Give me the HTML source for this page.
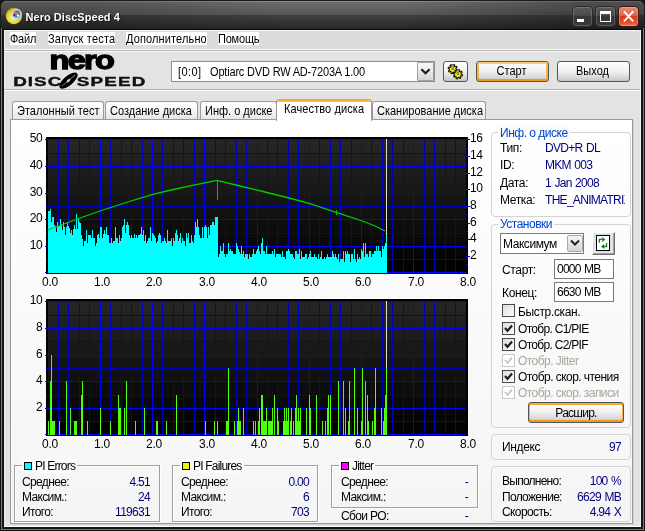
<!DOCTYPE html>
<html lang="ru">
<head>
<meta charset="utf-8">
<title>Nero DiscSpeed 4</title>
<style>
html,body{margin:0;padding:0;}
body{width:645px;height:531px;position:relative;overflow:hidden;background:#151515;
 font-family:"Liberation Sans","DejaVu Sans",sans-serif;font-size:11px;color:#000;}
.abs,.win *{position:absolute;box-sizing:border-box;}
.win{position:absolute;left:0;top:0;width:645px;height:531px;overflow:hidden;will-change:transform;}
.t{white-space:nowrap;line-height:13px;height:13px;}
/* frame */
.client{left:4px;top:30px;width:637px;height:497px;background:#e3e3e3;}
.title{left:0;top:0;width:645px;height:30px;border-radius:6px 6px 0 0;
 background:linear-gradient(90deg,rgba(0,0,0,.2) 0,rgba(0,0,0,.2) 90px,rgba(0,0,0,0) 290px,rgba(0,0,0,0) 400px,rgba(0,0,0,.28) 580px,rgba(0,0,0,.28) 100%),linear-gradient(#8a8a8a 0,#8a8a8a 1px,#6d6d6d 1px,#565656 14px,#414141 14px,#272727 28px,#0c0c0c 28px,#0c0c0c 29px);
 border:1px solid #1a1a1a;border-bottom:none;}
.ttext{left:25.5px;top:9px;font-weight:bold;font-size:11px;color:#fff;line-height:16px;white-space:nowrap;
 text-shadow:1px 1px 0 #201010;letter-spacing:0.05px;}
.wb{top:6px;width:21px;height:21px;border-radius:4px;border:1px solid #2b2b2b;
 background:linear-gradient(#5a5a5a 0,#4c4c4c 44%,#363636 47%,#3a3a3a 100%);box-shadow:inset 0 0 0 1px rgba(255,255,255,.16);}
.wb.close{background:linear-gradient(#e88874 0,#e0694e 44%,#d93a18 47%,#e2542e 85%,#ee7a58 100%);border-color:#3a1c14;box-shadow:inset 0 0 0 1px rgba(255,200,180,.35);}
/* menu */
.mi{top:2px;height:13px;background:#fff;line-height:15px;white-space:nowrap;font-size:11px;overflow:hidden;}
/* generic */
.btn{border:1px solid #555;border-radius:3px;background:linear-gradient(#fff 0,#f2f2f2 45%,#dadada 80%,#c4c4c4 100%);
 text-align:center;line-height:19px;font-size:11px;white-space:nowrap;}
.btn.def{box-shadow:inset 0 2px 0 #fbc976,inset 0 -2px 0 #ef9a14,inset 2px 0 0 #f7b248,inset -2px 0 0 #f7b248;}
.tab{top:71px;height:19px;border:1px solid #9a9a9a;border-bottom:none;border-radius:3px 3px 0 0;
 background:linear-gradient(#fff 0,#f6f6f6 50%,#e4e4e4 100%);line-height:19px;font-size:11px;padding-left:4px;white-space:nowrap;overflow:hidden;}
.tab.sel{top:69px;height:22px;background:#fff;border-top:none;line-height:21px;padding-left:7px;z-index:3;letter-spacing:0.1px;}
.tab.sel:before{content:"";position:absolute;left:-1px;right:-1px;top:0;height:3px;border-radius:3px 3px 0 0;
 background:linear-gradient(#f0a020,#ffc040);}
.page{left:6px;top:89px;width:623px;height:405px;border:1px solid #9a9a9a;background:linear-gradient(#fff,#f5f5f5);box-shadow:1px 1px 0 #d2d2d2;}
.yl{left:20px;width:22px;text-align:right;font-size:12px;line-height:14px;height:14px;letter-spacing:-0.6px;}
.rl{left:470px;width:22px;text-align:left;font-size:12px;line-height:14px;height:14px;letter-spacing:-0.4px;}
.xl{width:30px;text-align:center;font-size:12px;line-height:14px;height:14px;letter-spacing:-0.3px;}
.gb{border:1px solid #d3d3d6;border-radius:4px;}
.gl{font-size:12px;line-height:14px;height:14px;color:#0046d5;background:#fbfbfb;padding:0 2px;white-space:nowrap;letter-spacing:-0.5px;}
.r12{font-size:12px;line-height:14px;height:14px;white-space:nowrap;letter-spacing:-0.35px;}
.val{color:#000080;letter-spacing:-0.7px;word-spacing:0.8px;}
.inp{border:1px solid #7a7a7a;background:#fff;font-size:12px;line-height:17px;padding-left:2px;white-space:nowrap;letter-spacing:-0.75px;word-spacing:0.8px;}
.cb{width:13px;height:13px;border:1px solid #4a4a4a;background:linear-gradient(135deg,#dcdcdc,#fff);}
.cb.dis{border-color:#c8c8c8;background:#fff;}
.eb{border:1px solid #a0a0a0;box-shadow:inset 1px 1px 0 #fff, 1px 1px 0 #fff;}
.sq{width:8px;height:8px;border:1px solid #000;}
.right{text-align:right;}
.win .th{position:relative;display:inline-block;transform:scaleY(1.13);transform-origin:0 78%;}
</style>
</head>
<body>
<div class="win">
 <!-- title bar -->
 <div class="title"></div>
 <svg style="left:5px;top:6px" width="20" height="20" viewBox="0 0 20 20">
  <defs>
   <radialGradient id="dg" cx="0.45" cy="0.6" r="0.6"><stop offset="0" stop-color="#fff6a8"/><stop offset="0.55" stop-color="#e8d83a"/><stop offset="1" stop-color="#b8a010"/></radialGradient>
  </defs>
  <circle cx="9" cy="10" r="8.2" fill="url(#dg)"/>
  <circle cx="11.6" cy="8" r="4.9" fill="#eef0f4" stroke="#aab0b8" stroke-width="0.5"/>
  <circle cx="11.6" cy="8" r="3.8" fill="#2a8ee0"/>
  <path d="M10 5.2 L12.6 9.6" stroke="#f26a3a" stroke-width="1.7"/>
  <circle cx="13" cy="9.6" r="1.1" fill="#fff"/>
  <circle cx="13" cy="5.6" r="1.1" fill="#2f9a3a"/>
  <circle cx="9.3" cy="9" r="1.1" fill="#b01010"/>
  <circle cx="8.8" cy="7" r="0.7" fill="#f8e020"/>
 </svg>
 <div class="ttext">Nero DiscSpeed 4</div>
 <div class="wb" style="left:572px"><div style="left:4px;top:12px;width:7px;height:3px;background:#fff"></div></div>
 <div class="wb" style="left:595px"><div style="left:4px;top:4px;width:11px;height:11px;border:1px solid #fff;border-top-width:3px"></div></div>
 <div class="wb close" style="left:618px">
  <svg style="left:0;top:0" width="19" height="19" viewBox="0 0 19 19" shape-rendering="auto"><path d="M5 4.4 L14.2 14.4 M14.2 4.4 L5 14.4" stroke="#fff" stroke-width="2" stroke-linecap="butt"/></svg>
 </div>
 <!-- frame edges -->
 <div style="left:0;top:28px;width:1px;height:503px;background:#111"></div>
 <div style="left:1px;top:28px;width:1px;height:502px;background:#777"></div>
 <div style="left:644px;top:28px;width:1px;height:503px;background:#111"></div>
 <div style="left:643px;top:28px;width:1px;height:502px;background:#777"></div>
 <div style="left:0;top:530px;width:645px;height:1px;background:#111"></div>
 <div style="left:1px;top:529px;width:643px;height:1px;background:#777"></div>

 <div class="client">
  <div style="left:0;top:0;width:1px;height:497px;background:#ececec"></div>
  <div style="left:636px;top:0;width:1px;height:497px;background:#f0f0f0"></div>
  <div style="left:0;top:496px;width:637px;height:1px;background:#fff"></div>
  <div style="left:0;top:0;width:637px;height:1px;background:#f4f4f4"></div>
  <!-- menu -->
  <div style="left:1px;top:1px;width:635px;height:18px;background:#dcdcdc"></div>
  <div class="mi" style="left:6px;width:26px;letter-spacing:-0.25px"><span class="th">Файл</span></div>
  <div class="mi" style="left:44px;width:67px;letter-spacing:0.2px"><span class="th">Запуск теста</span></div>
  <div class="mi" style="left:122px;width:81px;letter-spacing:0.13px"><span class="th">Дополнительно</span></div>
  <div class="mi" style="left:214px;width:41px;letter-spacing:-0.2px"><span class="th">Помощь</span></div>
  <div style="left:0;top:19px;width:636px;height:1px;background:#fafafa"></div>
  <div style="left:0;top:20px;width:636px;height:1px;background:#b8b8b8"></div>
  <div style="left:0;top:21px;width:636px;height:1px;background:#fcfcfc"></div>
  <div style="left:0;top:59px;width:636px;height:1px;background:#b4b4b4"></div>
  <div style="left:0;top:60px;width:636px;height:1px;background:#fcfcfc"></div>
  <!-- logo -->
  <svg style="left:8px;top:20px" width="140" height="40" viewBox="0 0 140 40">
   <g transform="translate(37.6,19) scale(1.27,1)"><text x="0" y="0" font-family="Liberation Sans, sans-serif" font-weight="bold" font-size="25.5" letter-spacing="-1.3" fill="#000" stroke="#000" stroke-width="1.3">nero</text></g>
   <g transform="translate(1.2,35.6) scale(1.45,1)"><text x="0" y="0" font-family="Liberation Sans, sans-serif" font-weight="bold" font-size="13" letter-spacing="0.7" fill="#111" stroke="#111" stroke-width="0.4">DISC</text></g>
   <g transform="translate(64.8,35.6) scale(1.45,1)"><text x="0" y="0" font-family="Liberation Sans, sans-serif" font-weight="bold" font-size="13" letter-spacing="0.8" fill="#111" stroke="#111" stroke-width="0.4">SPEED</text></g>
   <g transform="translate(56.5,30.6) rotate(-40)"><ellipse cx="0" cy="0" rx="11.2" ry="4.8" fill="#000"/><ellipse cx="0" cy="0" rx="2.3" ry="1.1" fill="#e3e3e3"/><rect x="-9" y="-0.3" width="18" height="0.6" fill="#bbb"/></g>
  </svg>
  <!-- drive combo -->
  <div style="left:167px;top:31px;width:264px;height:21px;border:1px solid #8e8e8e;background:#fff"></div>
  <div class="t" style="left:174px;top:36px;font-size:11px;letter-spacing:0.4px"><span class="th">[0:0]</span></div><div class="t" style="left:206px;top:36px;font-size:11px;letter-spacing:-0.18px"><span class="th">Optiarc DVD RW AD-7203A 1.00</span></div>
  <div style="left:413px;top:32px;width:17px;height:19px;border:1px solid #a0a0a0;border-radius:1px;background:linear-gradient(#f8f8f8,#d6d6d6)">
   <svg style="left:2px;top:5px" width="11" height="8" viewBox="0 0 11 8"><path d="M1.4 1.2 L5.5 5.3 L9.6 1.2" fill="none" stroke="#1a1a1a" stroke-width="2.1"/></svg>
  </div>
  <div class="btn" style="left:439px;top:31px;width:25px;height:21px">
   <svg style="left:3px;top:1px" width="18" height="18" viewBox="0 0 18 18" shape-rendering="auto">
    <path d="M9.1,6.1 L10.5,6.7 L10.1,7.9 L8.7,7.7 L8.1,8.4 L8.7,9.8 L7.6,10.4 L6.7,9.3 L5.8,9.4 L5.2,10.8 L4.0,10.4 L4.2,9.0 L3.5,8.4 L2.1,9.0 L1.5,7.9 L2.6,7.0 L2.5,6.1 L1.1,5.5 L1.5,4.3 L2.9,4.5 L3.5,3.8 L2.9,2.4 L4.0,1.8 L4.9,2.9 L5.8,2.8 L6.4,1.4 L7.6,1.8 L7.4,3.2 L8.1,3.8 L9.5,3.2 L10.1,4.3 L9.0,5.2Z" fill="#f2f200" stroke="#141400" stroke-width="1.1" stroke-linejoin="round"/>
    <path d="M14.2,11.2 L15.6,11.8 L15.2,13.0 L13.8,12.8 L13.2,13.5 L13.8,14.9 L12.7,15.5 L11.8,14.4 L10.9,14.5 L10.3,15.9 L9.1,15.5 L9.3,14.1 L8.6,13.5 L7.2,14.1 L6.6,13.0 L7.7,12.1 L7.6,11.2 L6.2,10.6 L6.6,9.4 L8.0,9.6 L8.6,8.9 L8.0,7.5 L9.1,6.9 L10.0,8.0 L10.9,7.9 L11.5,6.5 L12.7,6.9 L12.5,8.3 L13.2,8.9 L14.6,8.3 L15.2,9.4 L14.1,10.3Z" fill="#f2f200" stroke="#141400" stroke-width="1.1" stroke-linejoin="round"/>
    <rect x="4.9" y="1.2" width="1.9" height="5.2" fill="#b8b8b8" stroke="#333" stroke-width="0.5"/>
    <rect x="10" y="6.3" width="1.9" height="5.2" fill="#b8b8b8" stroke="#333" stroke-width="0.5"/>
   </svg>
  </div>
  <div class="btn def" style="left:472px;top:31px;width:73px;height:21px;padding-right:2px"><span class="th">Старт</span></div>
  <div class="btn" style="left:553px;top:31px;width:73px;height:21px;padding-right:2px"><span class="th">Выход</span></div>
  <!-- tabs -->
  <div class="tab" style="left:8px;width:92px"><span class="th">Эталонный тест</span></div>
  <div class="tab" style="left:101px;width:93px"><span class="th">Создание диска</span></div>
  <div class="tab" style="left:196px;width:77px"><span class="th">Инф. о диске</span></div>
  <div class="tab" style="left:368px;width:114px"><span class="th">Сканирование диска</span></div>
  <div class="page"></div>
  <div class="tab sel" style="left:272px;width:96px"><span class="th">Качество диска</span></div>
 </div>

 <!-- charts (window coordinates) -->
 <svg style="left:0;top:0" width="645" height="531" viewBox="0 0 645 531" shape-rendering="crispEdges">
  <defs>
   <linearGradient id="cg" x1="0" y1="0" x2="0" y2="1"><stop offset="0" stop-color="#262626"/><stop offset="1" stop-color="#000"/></linearGradient>
  </defs>
  <!-- chart 1 -->
  <rect x="46" y="137" width="422" height="137" fill="#000"/>
  <rect x="48" y="139" width="418" height="134" fill="url(#cg)"/>
  <rect x="58" y="139" width="1" height="133" fill="#0000bc"/>
<rect x="68" y="139" width="1" height="133" fill="#0000bc"/>
<rect x="79" y="139" width="1" height="133" fill="#0000bc"/>
<rect x="89" y="139" width="1" height="133" fill="#0000bc"/>
<rect x="100" y="139" width="1" height="133" fill="#0000ff"/>
<rect x="110" y="139" width="1" height="133" fill="#0000bc"/>
<rect x="121" y="139" width="1" height="133" fill="#0000bc"/>
<rect x="131" y="139" width="1" height="133" fill="#0000bc"/>
<rect x="142" y="139" width="1" height="133" fill="#0000bc"/>
<rect x="152" y="139" width="1" height="133" fill="#0000ff"/>
<rect x="162" y="139" width="1" height="133" fill="#0000bc"/>
<rect x="173" y="139" width="1" height="133" fill="#0000bc"/>
<rect x="183" y="139" width="1" height="133" fill="#0000bc"/>
<rect x="194" y="139" width="1" height="133" fill="#0000bc"/>
<rect x="204" y="139" width="1" height="133" fill="#0000ff"/>
<rect x="215" y="139" width="1" height="133" fill="#0000bc"/>
<rect x="225" y="139" width="1" height="133" fill="#0000bc"/>
<rect x="236" y="139" width="1" height="133" fill="#0000bc"/>
<rect x="246" y="139" width="1" height="133" fill="#0000bc"/>
<rect x="257" y="139" width="1" height="133" fill="#0000ff"/>
<rect x="267" y="139" width="1" height="133" fill="#0000bc"/>
<rect x="277" y="139" width="1" height="133" fill="#0000bc"/>
<rect x="288" y="139" width="1" height="133" fill="#0000bc"/>
<rect x="298" y="139" width="1" height="133" fill="#0000bc"/>
<rect x="309" y="139" width="1" height="133" fill="#0000ff"/>
<rect x="319" y="139" width="1" height="133" fill="#0000bc"/>
<rect x="330" y="139" width="1" height="133" fill="#0000bc"/>
<rect x="340" y="139" width="1" height="133" fill="#0000bc"/>
<rect x="351" y="139" width="1" height="133" fill="#0000bc"/>
<rect x="361" y="139" width="1" height="133" fill="#0000ff"/>
<rect x="371" y="139" width="1" height="133" fill="#0000bc"/>
<rect x="382" y="139" width="1" height="133" fill="#0000bc"/>
<rect x="392" y="139" width="1" height="133" fill="#0000bc"/>
<rect x="403" y="139" width="1" height="133" fill="#0000bc"/>
<rect x="413" y="139" width="1" height="133" fill="#0000ff"/>
<rect x="424" y="139" width="1" height="133" fill="#0000bc"/>
<rect x="434" y="139" width="1" height="133" fill="#0000bc"/>
<rect x="445" y="139" width="1" height="133" fill="#0000bc"/>
<rect x="455" y="139" width="1" height="133" fill="#0000bc"/>
<rect x="45" y="139" width="421" height="1" fill="#0000ff"/>
<rect x="46" y="153" width="420" height="1" fill="#0000bc"/>
<rect x="45" y="166" width="421" height="1" fill="#0000ff"/>
<rect x="46" y="179" width="420" height="1" fill="#0000bc"/>
<rect x="45" y="193" width="421" height="1" fill="#0000ff"/>
<rect x="46" y="206" width="420" height="1" fill="#0000bc"/>
<rect x="45" y="219" width="421" height="1" fill="#0000ff"/>
<rect x="46" y="233" width="420" height="1" fill="#0000bc"/>
<rect x="45" y="246" width="421" height="1" fill="#0000ff"/>
<rect x="46" y="259" width="420" height="1" fill="#0000bc"/>
<rect x="45" y="272" width="421" height="1" fill="#0000ff"/>
  <path d="M48,273 L48,211 L49,211 L49,211 L50,211 L50,209 L51,209 L51,222 L52,222 L52,217 L53,217 L53,217 L54,217 L54,225 L55,225 L55,226 L56,226 L56,232 L57,232 L57,222 L58,222 L58,226 L59,226 L59,226 L60,226 L60,219 L61,219 L61,224 L62,224 L62,230 L63,230 L63,222 L64,222 L64,227 L65,227 L65,235 L66,235 L66,227 L67,227 L67,223 L68,223 L68,226 L69,226 L69,228 L70,228 L70,233 L71,233 L71,230 L72,230 L72,235 L73,235 L73,229 L74,229 L74,225 L75,225 L75,229 L76,229 L76,214 L77,214 L77,229 L78,229 L78,218 L79,218 L79,222 L80,222 L80,223 L81,223 L81,235 L82,235 L82,239 L83,239 L83,246 L84,246 L84,241 L85,241 L85,241 L86,241 L86,230 L87,230 L87,243 L88,243 L88,235 L89,235 L89,235 L90,235 L90,235 L91,235 L91,238 L92,238 L92,230 L93,230 L93,238 L94,238 L94,238 L95,238 L95,246 L96,246 L96,243 L97,243 L97,235 L98,235 L98,234 L99,234 L99,238 L100,238 L100,227 L101,227 L101,227 L102,227 L102,238 L103,238 L103,234 L104,234 L104,230 L105,230 L105,234 L106,234 L106,227 L107,227 L107,235 L108,235 L108,235 L109,235 L109,243 L110,243 L110,243 L111,243 L111,238 L112,238 L112,243 L113,243 L113,241 L114,241 L114,241 L115,241 L115,227 L116,227 L116,238 L117,238 L117,238 L118,238 L118,243 L119,243 L119,235 L120,235 L120,241 L121,241 L121,238 L122,238 L122,227 L123,227 L123,225 L124,225 L124,219 L125,219 L125,233 L126,233 L126,225 L127,225 L127,222 L128,222 L128,225 L129,225 L129,235 L130,235 L130,238 L131,238 L131,235 L132,235 L132,238 L133,238 L133,238 L134,238 L134,234 L135,234 L135,238 L136,238 L136,235 L137,235 L137,238 L138,238 L138,235 L139,235 L139,235 L140,235 L140,234 L141,234 L141,227 L142,227 L142,235 L143,235 L143,230 L144,230 L144,241 L145,241 L145,235 L146,235 L146,243 L147,243 L147,241 L148,241 L148,238 L149,238 L149,238 L150,238 L150,227 L151,227 L151,241 L152,241 L152,233 L153,233 L153,234 L154,234 L154,236 L155,236 L155,238 L156,238 L156,243 L157,243 L157,241 L158,241 L158,235 L159,235 L159,233 L160,233 L160,235 L161,235 L161,243 L162,243 L162,241 L163,241 L163,241 L164,241 L164,238 L165,238 L165,241 L166,241 L166,243 L167,243 L167,230 L168,230 L168,241 L169,241 L169,241 L170,241 L170,241 L171,241 L171,238 L172,238 L172,246 L173,246 L173,238 L174,238 L174,241 L175,241 L175,233 L176,233 L176,230 L177,230 L177,235 L178,235 L178,241 L179,241 L179,238 L180,238 L180,233 L181,233 L181,243 L182,243 L182,238 L183,238 L183,241 L184,241 L184,241 L185,241 L185,246 L186,246 L186,233 L187,233 L187,238 L188,238 L188,233 L189,233 L189,243 L190,243 L190,243 L191,243 L191,235 L192,235 L192,241 L193,241 L193,243 L194,243 L194,235 L195,235 L195,222 L196,222 L196,227 L197,227 L197,219 L198,219 L198,227 L199,227 L199,235 L200,235 L200,238 L201,238 L201,238 L202,238 L202,227 L203,227 L203,238 L204,238 L204,227 L205,227 L205,225 L206,225 L206,227 L207,227 L207,238 L208,238 L208,227 L209,227 L209,235 L210,235 L210,225 L211,225 L211,225 L212,225 L212,222 L213,222 L213,222 L214,222 L214,225 L215,225 L215,217 L216,217 L216,217 L217,217 L217,217 L218,217 L218,257 L219,257 L219,254 L220,254 L220,246 L221,246 L221,251 L222,251 L222,251 L223,251 L223,243 L224,243 L224,254 L225,254 L225,257 L226,257 L226,254 L227,254 L227,254 L228,254 L228,243 L229,243 L229,251 L230,251 L230,249 L231,249 L231,251 L232,251 L232,251 L233,251 L233,254 L234,254 L234,254 L235,254 L235,254 L236,254 L236,243 L237,243 L237,246 L238,246 L238,249 L239,249 L239,252 L240,252 L240,254 L241,254 L241,246 L242,246 L242,254 L243,254 L243,251 L244,251 L244,257 L245,257 L245,254 L246,254 L246,254 L247,254 L247,254 L248,254 L248,259 L249,259 L249,254 L250,254 L250,257 L251,257 L251,257 L252,257 L252,254 L253,254 L253,249 L254,249 L254,254 L255,254 L255,254 L256,254 L256,251 L257,251 L257,249 L258,249 L258,246 L259,246 L259,251 L260,251 L260,254 L261,254 L261,243 L262,243 L262,238 L263,238 L263,251 L264,251 L264,251 L265,251 L265,254 L266,254 L266,246 L267,246 L267,254 L268,254 L268,254 L269,254 L269,254 L270,254 L270,254 L271,254 L271,254 L272,254 L272,251 L273,251 L273,254 L274,254 L274,249 L275,249 L275,257 L276,257 L276,254 L277,254 L277,254 L278,254 L278,254 L279,254 L279,254 L280,254 L280,254 L281,254 L281,257 L282,257 L282,251 L283,251 L283,257 L284,257 L284,257 L285,257 L285,259 L286,259 L286,251 L287,251 L287,251 L288,251 L288,249 L289,249 L289,251 L290,251 L290,254 L291,254 L291,254 L292,254 L292,254 L293,254 L293,257 L294,257 L294,259 L295,259 L295,251 L296,251 L296,251 L297,251 L297,254 L298,254 L298,254 L299,254 L299,249 L300,249 L300,259 L301,259 L301,251 L302,251 L302,257 L303,257 L303,257 L304,257 L304,257 L305,257 L305,254 L306,254 L306,254 L307,254 L307,259 L308,259 L308,257 L309,257 L309,254 L310,254 L310,251 L311,251 L311,257 L312,257 L312,257 L313,257 L313,257 L314,257 L314,254 L315,254 L315,257 L316,257 L316,257 L317,257 L317,259 L318,259 L318,254 L319,254 L319,259 L320,259 L320,257 L321,257 L321,251 L322,251 L322,259 L323,259 L323,259 L324,259 L324,257 L325,257 L325,259 L326,259 L326,257 L327,257 L327,254 L328,254 L328,257 L329,257 L329,257 L330,257 L330,257 L331,257 L331,257 L332,257 L332,251 L333,251 L333,254 L334,254 L334,257 L335,257 L335,254 L336,254 L336,257 L337,257 L337,259 L338,259 L338,254 L339,254 L339,262 L340,262 L340,259 L341,259 L341,259 L342,259 L342,259 L343,259 L343,251 L344,251 L344,262 L345,262 L345,251 L346,251 L346,254 L347,254 L347,251 L348,251 L348,254 L349,254 L349,254 L350,254 L350,262 L351,262 L351,254 L352,254 L352,254 L353,254 L353,259 L354,259 L354,249 L355,249 L355,259 L356,259 L356,262 L357,262 L357,254 L358,254 L358,259 L359,259 L359,257 L360,257 L360,259 L361,259 L361,249 L362,249 L362,251 L363,251 L363,243 L364,243 L364,257 L365,257 L365,243 L366,243 L366,254 L367,254 L367,254 L368,254 L368,257 L369,257 L369,251 L370,251 L370,251 L371,251 L371,257 L372,257 L372,254 L373,254 L373,254 L374,254 L374,251 L375,251 L375,251 L376,251 L376,246 L377,246 L377,251 L378,251 L378,246 L379,246 L379,251 L380,251 L380,251 L381,251 L381,257 L382,257 L382,246 L383,246 L383,249 L384,249 L384,246 L385,246 L385,243 L386,243 L386,235 L387,235 L387,273 Z" fill="#00ffff"/>
  <path d="M47.5,230 L60,225.5 L80,218 L100,211 L126,202.5 L153,194.4 L169,190.5 L190,185.8 L217,180.4 L240,186 L265,192 L289,198 L310,203.6 L336,212.4 L361,220.5 L375,226 L385,231" fill="none" stroke="#00cc00" stroke-width="1.3" shape-rendering="auto"/>
  <rect x="217" y="181" width="1" height="19" fill="#00c000"/>
  <rect x="336" y="210" width="1" height="5" fill="#00c000"/>
  <rect x="386" y="139" width="1" height="96" fill="#dcdcdc"/>
  <rect x="386" y="235" width="1" height="38" fill="#00ffff"/>
  <rect x="466" y="264" width="2" height="1" fill="#0000ff"/>
<rect x="466" y="256" width="4" height="1" fill="#0000ff"/>
<rect x="466" y="247" width="2" height="1" fill="#0000ff"/>
<rect x="466" y="239" width="4" height="1" fill="#0000ff"/>
<rect x="466" y="231" width="2" height="1" fill="#0000ff"/>
<rect x="466" y="223" width="4" height="1" fill="#0000ff"/>
<rect x="466" y="214" width="2" height="1" fill="#0000ff"/>
<rect x="466" y="206" width="4" height="1" fill="#0000ff"/>
<rect x="466" y="198" width="2" height="1" fill="#0000ff"/>
<rect x="466" y="189" width="4" height="1" fill="#0000ff"/>
<rect x="466" y="181" width="2" height="1" fill="#0000ff"/>
<rect x="466" y="173" width="4" height="1" fill="#0000ff"/>
<rect x="466" y="164" width="2" height="1" fill="#0000ff"/>
<rect x="466" y="156" width="4" height="1" fill="#0000ff"/>
<rect x="466" y="148" width="2" height="1" fill="#0000ff"/>
<rect x="466" y="139" width="4" height="1" fill="#0000ff"/>
  <!-- chart 2 -->
  <rect x="46" y="299" width="422" height="137" fill="#000"/>
  <rect x="48" y="301" width="418" height="134" fill="url(#cg)"/>
  <rect x="58" y="301" width="1" height="133" fill="#0000bc"/>
<rect x="68" y="301" width="1" height="133" fill="#0000bc"/>
<rect x="79" y="301" width="1" height="133" fill="#0000bc"/>
<rect x="89" y="301" width="1" height="133" fill="#0000bc"/>
<rect x="100" y="301" width="1" height="133" fill="#0000ff"/>
<rect x="110" y="301" width="1" height="133" fill="#0000bc"/>
<rect x="121" y="301" width="1" height="133" fill="#0000bc"/>
<rect x="131" y="301" width="1" height="133" fill="#0000bc"/>
<rect x="142" y="301" width="1" height="133" fill="#0000bc"/>
<rect x="152" y="301" width="1" height="133" fill="#0000ff"/>
<rect x="162" y="301" width="1" height="133" fill="#0000bc"/>
<rect x="173" y="301" width="1" height="133" fill="#0000bc"/>
<rect x="183" y="301" width="1" height="133" fill="#0000bc"/>
<rect x="194" y="301" width="1" height="133" fill="#0000bc"/>
<rect x="204" y="301" width="1" height="133" fill="#0000ff"/>
<rect x="215" y="301" width="1" height="133" fill="#0000bc"/>
<rect x="225" y="301" width="1" height="133" fill="#0000bc"/>
<rect x="236" y="301" width="1" height="133" fill="#0000bc"/>
<rect x="246" y="301" width="1" height="133" fill="#0000bc"/>
<rect x="257" y="301" width="1" height="133" fill="#0000ff"/>
<rect x="267" y="301" width="1" height="133" fill="#0000bc"/>
<rect x="277" y="301" width="1" height="133" fill="#0000bc"/>
<rect x="288" y="301" width="1" height="133" fill="#0000bc"/>
<rect x="298" y="301" width="1" height="133" fill="#0000bc"/>
<rect x="309" y="301" width="1" height="133" fill="#0000ff"/>
<rect x="319" y="301" width="1" height="133" fill="#0000bc"/>
<rect x="330" y="301" width="1" height="133" fill="#0000bc"/>
<rect x="340" y="301" width="1" height="133" fill="#0000bc"/>
<rect x="351" y="301" width="1" height="133" fill="#0000bc"/>
<rect x="361" y="301" width="1" height="133" fill="#0000ff"/>
<rect x="371" y="301" width="1" height="133" fill="#0000bc"/>
<rect x="382" y="301" width="1" height="133" fill="#0000bc"/>
<rect x="392" y="301" width="1" height="133" fill="#0000bc"/>
<rect x="403" y="301" width="1" height="133" fill="#0000bc"/>
<rect x="413" y="301" width="1" height="133" fill="#0000ff"/>
<rect x="424" y="301" width="1" height="133" fill="#0000bc"/>
<rect x="434" y="301" width="1" height="133" fill="#0000bc"/>
<rect x="445" y="301" width="1" height="133" fill="#0000bc"/>
<rect x="455" y="301" width="1" height="133" fill="#0000bc"/>
<rect x="45" y="301" width="421" height="1" fill="#0000ff"/>
<rect x="46" y="315" width="420" height="1" fill="#0000bc"/>
<rect x="45" y="328" width="421" height="1" fill="#0000ff"/>
<rect x="46" y="341" width="420" height="1" fill="#0000bc"/>
<rect x="45" y="355" width="421" height="1" fill="#0000ff"/>
<rect x="46" y="368" width="420" height="1" fill="#0000bc"/>
<rect x="45" y="381" width="421" height="1" fill="#0000ff"/>
<rect x="46" y="395" width="420" height="1" fill="#0000bc"/>
<rect x="45" y="408" width="421" height="1" fill="#0000ff"/>
<rect x="46" y="421" width="420" height="1" fill="#0000bc"/>
<rect x="45" y="434" width="421" height="1" fill="#0000ff"/>
  <g fill="#50ff10">
  <rect x="48.0" y="421.1" width="1" height="13.9"/>
<rect x="50.0" y="381.2" width="1" height="53.8"/>
<rect x="51.0" y="354.6" width="1" height="80.4"/>
<rect x="59.0" y="421.1" width="1" height="13.9"/>
<rect x="66.0" y="381.2" width="1" height="53.8"/>
<rect x="70.0" y="407.8" width="1" height="27.2"/>
<rect x="81.0" y="394.5" width="1" height="40.5"/>
<rect x="82.0" y="381.2" width="1" height="53.8"/>
<rect x="87.0" y="421.1" width="1" height="13.9"/>
<rect x="100.0" y="407.8" width="1" height="27.2"/>
<rect x="110.0" y="421.1" width="1" height="13.9"/>
<rect x="118.0" y="394.5" width="1" height="40.5"/>
<rect x="124.0" y="407.8" width="1" height="27.2"/>
<rect x="126.0" y="381.2" width="1" height="53.8"/>
<rect x="135.0" y="421.1" width="1" height="13.9"/>
<rect x="144.0" y="407.8" width="1" height="27.2"/>
<rect x="166.0" y="421.1" width="1" height="13.9"/>
<rect x="52.0" y="421.1" width="3" height="13.9"/>
<rect x="74.0" y="421.1" width="3" height="13.9"/>
<rect x="118.6" y="407.8" width="2.5" height="27.2"/>
<rect x="156.0" y="421.1" width="2" height="13.9"/>
<rect x="176.0" y="394.5" width="1" height="40.5"/>
<rect x="205.0" y="421.1" width="1" height="13.9"/>
<rect x="214.0" y="421.1" width="1" height="13.9"/>
<rect x="217.0" y="421.1" width="1" height="13.9"/>
<rect x="228.0" y="367.9" width="1" height="67.1"/>
<rect x="234.0" y="421.1" width="1" height="13.9"/>
<rect x="238.0" y="407.8" width="1" height="27.2"/>
<rect x="243.0" y="407.8" width="1" height="27.2"/>
<rect x="253.0" y="421.1" width="1" height="13.9"/>
<rect x="255.0" y="421.1" width="1" height="13.9"/>
<rect x="259.0" y="407.8" width="1" height="27.2"/>
<rect x="266.0" y="407.8" width="1" height="27.2"/>
<rect x="272.0" y="407.8" width="1" height="27.2"/>
<rect x="274.0" y="394.5" width="1" height="40.5"/>
<rect x="277.0" y="407.8" width="1" height="27.2"/>
<rect x="278.0" y="421.1" width="1" height="13.9"/>
<rect x="284.0" y="407.8" width="1" height="27.2"/>
<rect x="286.0" y="407.8" width="1" height="27.2"/>
<rect x="287.6" y="407.8" width="1" height="27.2"/>
<rect x="225.6" y="421.1" width="2.6" height="13.9"/>
<rect x="236.6" y="421.1" width="4" height="13.9"/>
<rect x="257.6" y="421.1" width="2" height="13.9"/>
<rect x="260.6" y="394.5" width="2.4" height="40.5"/>
<rect x="262.6" y="421.1" width="3" height="13.9"/>
<rect x="267.6" y="421.1" width="5" height="13.9"/>
<rect x="283.6" y="421.1" width="5" height="13.9"/>
<rect x="282.6" y="421.1" width="1" height="13.9"/>
<rect x="284.0" y="407.8" width="1" height="27.2"/>
<rect x="286.0" y="407.8" width="1" height="27.2"/>
<rect x="288.0" y="407.8" width="1" height="27.2"/>
<rect x="290.0" y="421.1" width="1" height="13.9"/>
<rect x="291.0" y="407.8" width="1" height="27.2"/>
<rect x="293.0" y="421.1" width="1" height="13.9"/>
<rect x="295.0" y="407.8" width="1" height="27.2"/>
<rect x="296.0" y="394.5" width="1" height="40.5"/>
<rect x="298.0" y="407.8" width="1" height="27.2"/>
<rect x="300.0" y="407.8" width="1" height="27.2"/>
<rect x="306.0" y="407.8" width="1" height="27.2"/>
<rect x="309.0" y="394.5" width="1" height="40.5"/>
<rect x="316.0" y="394.5" width="1" height="40.5"/>
<rect x="322.0" y="421.1" width="1" height="13.9"/>
<rect x="325.0" y="421.1" width="1" height="13.9"/>
<rect x="327.0" y="407.8" width="1" height="27.2"/>
<rect x="328.0" y="394.5" width="1" height="40.5"/>
<rect x="330.0" y="394.5" width="1" height="40.5"/>
<rect x="338.0" y="381.2" width="1" height="53.8"/>
<rect x="343.0" y="381.2" width="1" height="53.8"/>
<rect x="345.0" y="407.8" width="1" height="27.2"/>
<rect x="349.0" y="381.2" width="1" height="53.8"/>
<rect x="354.0" y="367.9" width="1" height="67.1"/>
<rect x="357.0" y="407.8" width="1" height="27.2"/>
<rect x="362.0" y="367.9" width="1" height="67.1"/>
<rect x="365.0" y="381.2" width="1" height="53.8"/>
<rect x="367.0" y="394.5" width="1" height="40.5"/>
<rect x="368.0" y="421.1" width="1" height="13.9"/>
<rect x="372.0" y="421.1" width="1" height="13.9"/>
<rect x="374.0" y="407.8" width="1" height="27.2"/>
<rect x="375.0" y="367.9" width="1" height="67.1"/>
<rect x="381.0" y="407.8" width="1" height="27.2"/>
<rect x="384.0" y="407.8" width="1" height="27.2"/>
<rect x="385.0" y="394.5" width="1" height="40.5"/>
<rect x="386.0" y="367.9" width="1" height="67.1"/>
<rect x="294.6" y="421.1" width="6" height="13.9"/>
<rect x="309.6" y="407.8" width="1.5" height="27.2"/>
<rect x="347.6" y="421.1" width="2.6" height="13.9"/>
<rect x="360.6" y="421.1" width="2.8" height="13.9"/>
<rect x="382.6" y="421.1" width="4" height="13.9"/>
  </g>
  <rect x="386" y="301" width="1" height="67" fill="#dcdcdc"/>
  
 </svg>
 <div class="yl" style="top:131px">50</div><div class="yl" style="top:158px">40</div><div class="yl" style="top:185px">30</div><div class="yl" style="top:211px">20</div><div class="yl" style="top:238px">10</div><div class="yl" style="top:293px">10</div><div class="yl" style="top:320px">8</div><div class="yl" style="top:347px">6</div><div class="yl" style="top:373px">4</div><div class="yl" style="top:400px">2</div><div class="rl" style="top:131px">16</div><div class="rl" style="top:148px">14</div><div class="rl" style="top:165px">12</div><div class="rl" style="top:181px">10</div><div class="rl" style="top:198px">8</div><div class="rl" style="top:215px">6</div><div class="rl" style="top:231px">4</div><div class="rl" style="top:248px">2</div><div class="xl" style="left:35px;top:275px">0.0</div><div class="xl" style="left:87px;top:275px">1.0</div><div class="xl" style="left:139px;top:275px">2.0</div><div class="xl" style="left:192px;top:275px">3.0</div><div class="xl" style="left:244px;top:275px">4.0</div><div class="xl" style="left:296px;top:275px">5.0</div><div class="xl" style="left:348px;top:275px">6.0</div><div class="xl" style="left:401px;top:275px">7.0</div><div class="xl" style="left:453px;top:275px">8.0</div><div class="xl" style="left:35px;top:437px">0.0</div><div class="xl" style="left:87px;top:437px">1.0</div><div class="xl" style="left:139px;top:437px">2.0</div><div class="xl" style="left:192px;top:437px">3.0</div><div class="xl" style="left:244px;top:437px">4.0</div><div class="xl" style="left:296px;top:437px">5.0</div><div class="xl" style="left:348px;top:437px">6.0</div><div class="xl" style="left:401px;top:437px">7.0</div><div class="xl" style="left:453px;top:437px">8.0</div>

 <!-- right panel: disc info -->
 <div class="gb" style="left:491px;top:132px;width:140px;height:85px"></div>
 <div class="gl" style="left:498px;top:126px">Инф. о диске</div>
 <div class="r12" style="left:500px;top:141px">Тип:</div><div class="r12 val" style="left:545px;top:141px">DVD+R DL</div>
 <div class="r12" style="left:500px;top:158px">ID:</div><div class="r12 val" style="left:545px;top:158px">MKM 003</div>
 <div class="r12" style="left:500px;top:176px">Дата:</div><div class="r12 val" style="left:545px;top:176px">1 Jan 2008</div>
 <div class="r12" style="left:500px;top:193px">Метка:</div><div class="r12 val" style="left:545px;top:193px;width:80px;overflow:hidden">THE_ANIMATRIX</div>
 <!-- settings -->
 <div class="gb" style="left:491px;top:224px;width:140px;height:204px"></div>
 <div class="gl" style="left:498px;top:217px">Установки</div>
 <div class="inp" style="left:500px;top:233px;width:84px;height:21px;line-height:20px;letter-spacing:-0.45px">Максимум</div>
 <div style="left:567px;top:235px;width:16px;height:17px;border:1px solid #a8a8a8;border-radius:2px;background:linear-gradient(#f6f6f6,#d4d4d4)">
   <svg style="left:2px;top:3px" width="10" height="8" viewBox="0 0 10 8"><path d="M1 1.5 L5 5.5 L9 1.5" fill="none" stroke="#222" stroke-width="2"/></svg>
 </div>
 <div style="left:592px;top:232px;width:23px;height:23px;background:#e2e2e2;border-top:1px solid #fff;border-left:1px solid #fff;border-right:1px solid #6e6e6e;border-bottom:1px solid #6e6e6e;box-shadow:inset -1px -1px 0 #a4a4a4">
  <svg style="left:3px;top:2px" width="14" height="16" viewBox="0 0 14 16" shape-rendering="auto">
   <rect x="0.5" y="0.5" width="13" height="15" fill="#fff" stroke="#000"/>
   <path d="M3.4 7.8 V4.4 H7" fill="none" stroke="#0a8a1a" stroke-width="1.3"/><path d="M6.3 1.9 L9.4 4.4 L6.3 6.9 Z" fill="#0a8a1a"/>
   <path d="M10.6 8.1 V11.5 H7.5" fill="none" stroke="#0a8a1a" stroke-width="1.3"/><path d="M8.1 9 L5 11.5 L8.1 14 Z" fill="#0a8a1a"/>
  </svg>
 </div>
 <div class="r12" style="left:502px;top:263px">Старт:</div>
 <div class="inp" style="left:554px;top:259px;width:60px;height:20px;line-height:19px">0000 MB</div>
 <div class="r12" style="left:502px;top:286px">Конец:</div>
 <div class="inp" style="left:554px;top:282px;width:60px;height:20px;line-height:18px">6630 MB</div>
 <div class="cb" style="left:502px;top:304px"></div><div class="r12" style="left:518px;top:305px">Быстр.скан.</div>
 <div class="cb" style="left:502px;top:322px"></div><div class="r12" style="left:518px;top:322px;letter-spacing:-0.7px">Отобр. C1/PIE</div>
 <div class="cb" style="left:502px;top:338px"></div><div class="r12" style="left:518px;top:338px;letter-spacing:-0.7px">Отобр. C2/PIF</div>
 <div class="cb dis" style="left:502px;top:354px"></div><div class="r12" style="left:518px;top:354px;color:#a8a89a;letter-spacing:-0.55px">Отобр. Jitter</div>
 <div class="cb" style="left:502px;top:370px"></div><div class="r12" style="left:518px;top:370px;letter-spacing:-0.55px">Отобр. скор. чтения</div>
 <div class="cb dis" style="left:502px;top:386px"></div><div class="r12" style="left:518px;top:386px;color:#a8a89a;letter-spacing:-0.55px">Отобр. скор. записи</div>
 <svg style="left:502px;top:322px" width="13" height="80" viewBox="0 0 13 80">
  <g fill="none" stroke="#222" stroke-width="2.3"><path d="M3 6 L5.5 8.8 L10 3.6"/><path d="M3 22 L5.5 24.8 L10 19.6"/><path d="M3 54 L5.5 56.8 L10 51.6"/></g>
  <g fill="none" stroke="#c4c4c4" stroke-width="1.8"><path d="M3 38 L5.5 40.8 L10 35.6"/><path d="M3 70 L5.5 72.8 L10 67.6"/></g>
 </svg>
 <div class="btn" style="left:528px;top:402px;width:96px;height:21px;font-size:12px;line-height:20px;letter-spacing:-0.75px;box-shadow:inset 0 2px 0 #f9a62b,inset 0 -2px 0 #f39a1c,inset 1px 0 0 #f9b44b,inset -1px 0 0 #f9b44b">Расшир.</div>
 <!-- index -->
 <div class="gb" style="left:491px;top:434px;width:140px;height:26px"></div>
 <div class="r12" style="left:502px;top:440px">Индекс</div><div class="r12 val right" style="left:580px;top:440px;width:41px">97</div>
 <div class="gb" style="left:491px;top:466px;width:140px;height:56px"></div>
 <div class="r12" style="left:502px;top:474px;letter-spacing:-0.75px">Выполнено:</div><div class="r12 val right" style="left:560px;top:474px;width:61px">100 %</div>
 <div class="r12" style="left:502px;top:490px;letter-spacing:-0.7px">Положение:</div><div class="r12 val right" style="left:560px;top:490px;width:61px">6629 MB</div>
 <div class="r12" style="left:502px;top:505px;letter-spacing:-0.6px">Скорость:</div><div class="r12 val right" style="left:560px;top:505px;width:61px">4.94 X</div>

 <!-- bottom stats -->
 <div class="eb" style="left:14px;top:465px;width:146px;height:57px"></div>
 <div class="gl" style="left:22px;top:459px;color:#000;padding-left:13px;padding-right:2px;letter-spacing:-0.8px">PI Errors</div>
 <div class="sq" style="left:24px;top:462px;background:#00ffff"></div>
 <div class="r12" style="left:22px;top:475px;letter-spacing:-0.65px">Среднее:</div><div class="r12 val right" style="left:90px;top:475px;width:60px">4.51</div>
 <div class="r12" style="left:22px;top:490px;letter-spacing:-0.65px">Максим.:</div><div class="r12 val right" style="left:90px;top:490px;width:60px">24</div>
 <div class="r12" style="left:22px;top:505px;letter-spacing:-0.65px">Итого:</div><div class="r12 val right" style="left:90px;top:505px;width:60px">119631</div>

 <div class="eb" style="left:172px;top:465px;width:146px;height:57px"></div>
 <div class="gl" style="left:180px;top:459px;color:#000;padding-left:13px;padding-right:2px;letter-spacing:-0.8px">PI Failures</div>
 <div class="sq" style="left:182px;top:462px;background:#f0f000"></div>
 <div class="r12" style="left:181px;top:475px;letter-spacing:-0.65px">Среднее:</div><div class="r12 val right" style="left:249px;top:475px;width:60px">0.00</div>
 <div class="r12" style="left:181px;top:490px;letter-spacing:-0.65px">Максим.:</div><div class="r12 val right" style="left:249px;top:490px;width:60px">6</div>
 <div class="r12" style="left:181px;top:505px;letter-spacing:-0.65px">Итого:</div><div class="r12 val right" style="left:249px;top:505px;width:60px">703</div>

 <div class="eb" style="left:331px;top:465px;width:147px;height:43px"></div>
 <div class="gl" style="left:339px;top:459px;color:#000;padding-left:13px;padding-right:2px;letter-spacing:-0.8px">Jitter</div>
 <div class="sq" style="left:341px;top:462px;background:#ff00ff"></div>
 <div class="r12" style="left:341px;top:475px;letter-spacing:-0.65px">Среднее:</div><div class="r12 val right" style="left:408px;top:475px;width:60px">-</div>
 <div class="r12" style="left:341px;top:490px;letter-spacing:-0.65px">Максим.:</div><div class="r12 val right" style="left:408px;top:490px;width:60px">-</div>
 <div class="r12" style="left:341px;top:509px;letter-spacing:-0.65px">Сбои PO:</div><div class="r12 val right" style="left:408px;top:509px;width:60px">-</div>
</div>
</body>
</html>
